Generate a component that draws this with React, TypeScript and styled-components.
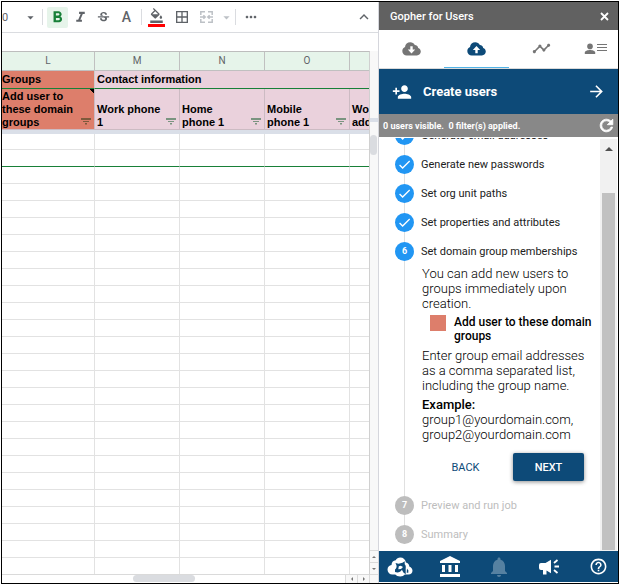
import React from "react";
import styled, { createGlobalStyle, css } from "styled-components";
import {
  MdAccountBalance,
  MdArrowDropDown,
  MdArrowForward,
  MdBorderAll,
  MdCheck,
  MdFormatBold,
  MdFormatColorFill,
  MdFormatItalic,
  MdHelpOutline,
  MdKeyboardArrowUp,
  MdMoreHoriz,
  MdNotifications,
  MdPersonAdd,
  MdRefresh,
  MdStrikethroughS,
  MdTimeline,
} from "react-icons/md";

const navy = "#0d4a78";
const green = "#188038";
const salmon = "#dd7e6b";
const pink = "#ead1dc";

const GlobalStyle = createGlobalStyle`
  * { box-sizing: border-box; }
  body { margin: 0; background: #fff; font-family: Roboto, "Liberation Sans", sans-serif; }
  button { font: inherit; color: inherit; background: none; border: 0; padding: 0; cursor: pointer; }
  svg { display: block; flex: none; }
`;

const Page = styled.div`
  height: 100vh;
  padding: 1px 0 0 1px;
`;

const Frame = styled.div`
  height: 100%;
  display: grid;
  grid-template-columns: minmax(0, 1fr) 239px;
  border: 1px solid #000;
  overflow: hidden;
`;

/* ---------- spreadsheet ---------- */

const Sheet = styled.main`
  display: flex;
  flex-direction: column;
  min-height: 0;
  border-right: 1px solid #d5d6dc;
`;

const Toolbar = styled.div`
  display: flex;
  align-items: center;
  height: 31px;
  flex: none;
  border-bottom: 1px solid #dadce0;
  color: #5f6368;
`;

const ToolGroup = styled.div<{ $gap: number }>`
  display: flex;
  align-items: center;
  gap: ${(p) => p.$gap}px;
`;

const ToolButton = styled.button<{ $active?: boolean; $narrow?: boolean; $muted?: boolean }>`
  display: flex;
  align-items: center;
  justify-content: center;
  width: ${(p) => (p.$narrow ? 10 : 21)}px;
  height: 21px;
  border-radius: 2px;
  ${(p) => p.$muted && css`color: #bdc1c6;`}
  ${(p) => p.$active && css`background: #e6f4ea; color: ${green};`}
`;

const LetterButton = styled(ToolButton)`
  font-size: 14px;
  font-weight: 500;
`;

const FillButton = styled(ToolButton)`
  height: 19px;
  align-items: flex-start;
  border-bottom: 3px solid #f00;
  border-radius: 0;
  width: 17px;
  margin: 0 2px;
`;

const SizeButton = styled.button`
  display: flex;
  align-items: center;
  justify-content: space-between;
  width: 36px;
  height: 21px;
  font-size: 11px;
`;

const ToolDivider = styled.span`
  width: 1px;
  height: 16px;
  margin: 0 4px;
  background: #dadce0;
`;

const Collapse = styled(ToolButton)`
  margin: 0 4px 0 auto;
`;

const FormulaSpace = styled.div`
  height: 18px;
  flex: none;
`;

const GridArea = styled.div`
  flex: 1;
  min-height: 0;
  display: grid;
  grid-template-columns: minmax(0, 1fr) 8px;
  grid-template-rows: minmax(0, 1fr) 8px;
`;

const Cells = styled.div`
  overflow: hidden;
  border-top: 1px solid #bdbdbd;
  border-right: 1px solid #d0d0d0;
  border-bottom: 1px solid #dadada;
`;

const Table = styled.table`
  table-layout: fixed;
  width: 433px;
  border-collapse: separate;
  border-spacing: 0;
  font: bold 11px/13px "Liberation Sans", Arial, sans-serif;
  color: #000;
`;

const ColumnLetter = styled.th`
  height: 19px;
  padding: 0;
  background: #e6f4ea;
  border-right: 1px solid #c0c0c0;
  border-bottom: 1px solid #c0c0c0;
  font: 10px/18px Roboto, sans-serif;
  color: #5f6368;
`;

const GroupCell = styled.th<{ $fill: string }>`
  height: 18px;
  padding: 0 0 0 2px;
  text-align: left;
  white-space: nowrap;
  background: ${(p) => p.$fill};
  border-right: 1px solid #ccc;
  border-bottom: 1px solid ${green};
  &:first-child { padding-left: 0; }
`;

const FieldCell = styled.th<{ $fill: string; $note?: boolean }>`
  height: 41px;
  padding: 0 3px 0 ${(p) => (p.$note ? 0 : 2)}px;
  vertical-align: bottom;
  text-align: left;
  background: ${(p) =>
    p.$note ? `linear-gradient(45deg, transparent 50%, #000 50%) top right / 4px 4px no-repeat, ${p.$fill}` : p.$fill};
  border-right: 1px solid #ccbbc3;
  border-bottom: 1px solid #ccbbc3;
`;

const Field = styled.div`
  display: flex;
  align-items: flex-end;
  justify-content: space-between;
  white-space: pre-line;
`;

const FilterButton = styled.button<{ $fill: string }>`
  padding-bottom: 4px;
  color: ${(p) => p.$fill};
`;

const FreezeCell = styled.td`
  height: 4px;
  padding: 0;
  background: #dadfe8;
`;

const Cell = styled.td<{ $first?: boolean; $marked?: boolean }>`
  height: ${(p) => (p.$first ? 16 : 17)}px;
  padding: 0;
  border-right: 1px solid #e2e2e2;
  border-bottom: 1px solid ${(p) => (p.$marked ? green : "#e2e2e2")};
`;

const VerticalScroll = styled.div`
  display: flex;
  flex-direction: column;
  background: #f8f8f8;
  border-bottom: 1px solid #dadada;
`;

const FreezeGrip = styled.div`
  height: 4px;
  margin-top: 67px;
  background: #dadfe8;
`;

const VerticalThumb = styled.div`
  width: 7px;
  height: 20px;
  margin-top: 13px;
  border-radius: 4px;
  background: #dadce0;
`;

const ArrowStack = styled.div`
  margin-top: auto;
  display: flex;
  flex-direction: column;
`;

const ScrollArrow = styled.button<{ $wide?: boolean }>`
  display: flex;
  align-items: center;
  justify-content: center;
  overflow: hidden;
  color: #777;
  background: #f8f8f8;
  ${(p) =>
    p.$wide
      ? css`width: 12px; height: 8px; border-left: 1px solid #dadada;`
      : css`width: 8px; height: 12px; border-top: 1px solid #dadada;`}
`;

const HorizontalScroll = styled.div`
  display: flex;
  padding-left: 131px;
  border-right: 1px solid #dadada;
`;

const HorizontalThumb = styled.div`
  width: 62px;
  height: 7px;
  border-radius: 4px;
  background: #dadce0;
`;

const ArrowPair = styled.div`
  display: flex;
  margin-left: auto;
`;

const Corner = styled.div`
  background: #f8f8f8;
`;

/* ---------- add-on sidebar ---------- */

const Sidebar = styled.aside`
  display: flex;
  flex-direction: column;
  min-height: 0;
  color: #212121;
`;

const TitleBar = styled.header`
  display: flex;
  align-items: center;
  justify-content: space-between;
  height: 28px;
  flex: none;
  padding: 0 9px 0 11px;
  background: #616161;
  color: #fff;
  font-size: 11px;
  font-weight: 500;
`;

const Tabs = styled.nav`
  display: flex;
  height: 39px;
  flex: none;
  overflow: hidden;
  border-bottom: 1px solid #dadada;
`;

const Tab = styled.button<{ $active?: boolean; $last?: boolean }>`
  flex: none;
  display: flex;
  align-items: center;
  justify-content: center;
  width: ${(p) => (p.$last ? 44 : 65)}px;
  color: ${(p) => (p.$active ? navy : "#757575")};
  border-bottom: 1px solid ${(p) => (p.$active ? "#4fb3e8" : "transparent")};
`;

const ActionBar = styled.button`
  && {
    display: flex;
    align-items: center;
    height: 45px;
    flex: none;
    padding: 0 12px 0 13px;
    background: ${navy};
    color: #fff;
    font-size: 13px;
    font-weight: 700;
  }
`;

const ActionLabel = styled.span`
  flex: 1;
  padding-left: 11px;
  text-align: left;
`;

const StatusBar = styled.div`
  display: flex;
  align-items: center;
  justify-content: space-between;
  height: 23px;
  flex: none;
  margin-bottom: 1px;
  padding: 0 2px 0 4px;
  background: #888;
  color: #fff;
  font-size: 9px;
  font-weight: 700;
  white-space: pre;
`;

const RefreshButton = styled.button`
  path:last-child { stroke: currentColor; stroke-width: 1; }
`;

const Viewport = styled.div`
  flex: 1;
  min-height: 0;
  display: grid;
  grid-template-columns: minmax(0, 1fr) 17px;
  grid-template-rows: minmax(0, 1fr);
  padding-right: 1px;
`;

const Steps = styled.ol`
  display: flex;
  flex-direction: column;
  justify-content: flex-end;
  margin: 0;
  padding: 0 2px 2px 16px;
  overflow: hidden;
  list-style: none;
`;

const Step = styled.li<{ $muted?: boolean }>`
  flex: none;
  display: grid;
  grid-template-columns: 19px minmax(0, 1fr);
  column-gap: 7px;
  font-size: 11px;
  line-height: 29px;
  color: ${(p) => (p.$muted ? "#bdbdbd" : "#212121")};
`;

const Rail = styled.span<{ $last?: boolean }>`
  display: flex;
  flex-direction: column;
  align-items: center;
  &::before, &::after { content: ""; width: 1px; background: #e0e0e0; height: 5px; }
  &::after { ${(p) => (p.$last ? css`height: 5px; background: none;` : css`height: auto; flex: 1;`)} }
`;

const Marker = styled.span<{ $muted?: boolean }>`
  display: flex;
  align-items: center;
  justify-content: center;
  width: 19px;
  height: 19px;
  border-radius: 50%;
  background: ${(p) => (p.$muted ? "#bdbdbd" : "#2196f3")};
  color: #fff;
  font-size: 9px;
  font-weight: 700;
  line-height: 19px;
`;

const StepBody = styled.div`
  padding: 0 0 10px 1px;
  color: #000;
  font-size: 13px;
  font-weight: 300;
  line-height: 15px;
`;

const Paragraph = styled.p`
  margin: 0 0 4px;
`;

const ColumnKey = styled.div`
  display: flex;
  gap: 8px;
  margin: 0 0 5px 8px;
  font-size: 12px;
  font-weight: 500;
  line-height: 14px;
`;

const Swatch = styled.span`
  flex: none;
  width: 16px;
  height: 16px;
  background: ${salmon};
`;

const Strong = styled.strong`
  font-weight: 500;
`;

const Actions = styled.div`
  display: flex;
  justify-content: flex-end;
  margin-top: 11px;
  padding-right: 14px;
  gap: 12px;
`;

const StepButton = styled.button<{ $primary?: boolean }>`
  && {
    width: 71px;
    height: 28px;
    border-radius: 2px;
    color: ${navy};
    font-size: 11px;
    font-weight: 400;
    ${(p) =>
      p.$primary &&
      css`
        background: ${navy};
        color: #fff;
        font-weight: 500;
        box-shadow: 0 1px 4px rgba(0, 0, 0, 0.45);
      `}
  }
`;

const ScrollTrack = styled.div`
  display: flex;
  flex-direction: column;
  align-items: center;
  margin-top: 1px;
  padding: 6px 2px 1px;
  background: #f1f1f1;
  color: #505050;
`;

const ScrollThumb = styled.div`
  flex: 1;
  align-self: stretch;
  margin-top: 40px;
  background: #c1c1c1;
`;

const Footer = styled.footer`
  display: flex;
  align-items: center;
  justify-content: space-between;
  height: 31px;
  flex: none;
  margin-bottom: 1px;
  padding: 0 7px 0 8px;
  background: ${navy};
  color: #fff;
`;

const FooterButton = styled.button<{ $dim?: boolean }>`
  display: flex;
  justify-content: center;
  width: 26px;
  opacity: ${(p) => (p.$dim ? 0.3 : 1)};
`;

/* ---------- icons ---------- */

const Cloud = ({ down }: { down?: boolean }) => (
  <svg width="19" height="14" viewBox="0 0 19 14" fill="currentColor">
    <path
      fillRule="evenodd"
      d={
        "M4.7 13.5A4.4 4.4 0 0 1 .3 9.1C.3 7.2 1.4 5.7 3 5 3.3 2.3 5.4.3 8.3.3c2 0 3.6 1 4.5 2.7 2 .1 3.2 1.3 3.4 3 1.5.5 2.6 1.9 2.6 3.6 0 2.2-1.7 3.9-3.9 3.9z " +
        (down ? "M8.3 4.2h2.4v3.3h2.5L9.5 11.4 5.8 7.5h2.5z" : "M8.3 11.2h2.4V7.9h2.5L9.5 4 5.8 7.9h2.5z")
      }
    />
  </svg>
);

const PersonLines = () => (
  <svg width="24" height="12" viewBox="0 0 24 12" fill="currentColor">
    <circle cx="6" cy="3.4" r="2.8" />
    <path d="M.8 11V9.6C.8 7.9 3.6 7 6 7s5.2.9 5.2 2.6V11z" />
    <path d="M13 1h10v1H13zM13 4h10v1H13zM13 7h10v1H13z" />
  </svg>
);

const Close = () => (
  <svg width="9" height="9" viewBox="0 0 9 9" stroke="currentColor" strokeWidth="1.8">
    <path d="M1 1l7 7M8 1L1 8" />
  </svg>
);

const FilterLines = () => (
  <svg width="10" height="7" viewBox="0 0 10 7" fill="currentColor">
    <path d="M0 0h10v2H0zM2 3h6v1H2zM4 5h2v1.500H4z" />
  </svg>
);

const MergeCells = () => (
  <svg width="13" height="12" viewBox="0 0 13 12" fill="none" stroke="currentColor" strokeWidth="1.5">
    <path d="M5 .8H.8V4M8 .8h4.2V4M5 11.2H.8V8M8 11.2h4.2V8M0 6h5M13 6H8M3.4 4.2L5.2 6 3.4 7.8M9.6 4.2L7.8 6l1.8 1.8" />
  </svg>
);

const GopherCloud = () => (
  <svg width="26" height="20" viewBox="0 0 26 20" fill="currentColor">
    <path d="M5.500 17.500A4.900 4.900 0 0 1 .5 12.700C.5 10 2.300 8.300 4.500 8 4.700 5 6.300 3.500 8.700 3.300 9.700 1.500 11.200.5 13.200.5c3.200 0 5.300 2 5.700 5 2.200.5 3.300 2 3.400 4 2 .8 3.200 2.300 3.200 4.300 0 2.300-1.700 3.700-4 3.700h-3.700c-1 1.300-2.500 2-4.600 2-2.200 0-3.900-.7-4.900-2z" />
    <path
      fill={navy}
      d="M8 12.500c1.300-.8 1.800-2.200 1.500-4L8.500 6l3 .8c1.500-.3 2.700-.5 4-1l2.200-1.600v3c1 1 1.300 2.300 1 4v6l-2.300-1.700-1.500-2.700c-1.500 2.400-4 3.200-6.900 2.200z"
    />
    <path d="M11.800 9.200l2-.4 2.200 1.200-2 2-2.700.3z" />
    <path fill={navy} d="M20 11.500l1.300 2v2.300h-1.600z" />
  </svg>
);

const Megaphone = () => (
  <svg width="22" height="18" viewBox="0 0 22 18" fill="currentColor">
    <path d="M3 5h4.500L13 1.800v13.400L8.500 12.500v4H5V12H3a2 2 0 0 1-2-2V7a2 2 0 0 1 2-2z" />
    <path fill="none" stroke="currentColor" strokeWidth="1.8" d="M16 5l3.500-3M16.500 8.500H21M16 12l3.500 3" />
  </svg>
);

const Triangle = ({ size, turn }: { size: number; turn: number }) => (
  <svg width={size} height={size} viewBox="0 0 8 8" fill="currentColor">
    <path transform={`rotate(${turn} 4 4)`} d="M0 6l4-4 4 4z" />
  </svg>
);

/* ---------- data ---------- */

const columns = ["L", "M", "N", "O", ""];

const fields = [
  { label: "Add user to\nthese domain\ngroups", fill: salmon, note: true },
  { label: "Work phone\n1", fill: pink },
  { label: "Home\nphone 1", fill: pink },
  { label: "Mobile\nphone 1", fill: pink },
  { label: "Work\naddress", fill: pink },
];

const doneSteps = [
  "Generate email addresses",
  "Generate new passwords",
  "Set org unit paths",
  "Set properties and attributes",
];

const pendingSteps = [
  { number: 7, label: "Preview and run job" },
  { number: 8, label: "Summary" },
];

const rowNumbers = Array.from({ length: 26 }, (_, i) => i);

function Spreadsheet() {
  return (
    <Sheet>
      <Toolbar>
        <SizeButton aria-label="Font size">
          <span>0</span>
          <MdArrowDropDown size={15} />
        </SizeButton>
        <ToolDivider />
        <ToolGroup $gap={2}>
          <ToolButton $active aria-label="Bold"><MdFormatBold size={19} /></ToolButton>
          <ToolButton aria-label="Italic"><MdFormatItalic size={17} /></ToolButton>
          <ToolButton aria-label="Strikethrough"><MdStrikethroughS size={15} /></ToolButton>
          <LetterButton aria-label="Text color">A</LetterButton>
        </ToolGroup>
        <ToolDivider />
        <ToolGroup $gap={4}>
          <FillButton aria-label="Fill color"><MdFormatColorFill size={15} /></FillButton>
          <ToolButton aria-label="Borders"><MdBorderAll size={16} /></ToolButton>
          <ToolButton $muted aria-label="Merge cells"><MergeCells /></ToolButton>
          <ToolButton $muted $narrow aria-label="Merge options"><MdArrowDropDown size={15} /></ToolButton>
        </ToolGroup>
        <ToolDivider />
        <ToolButton aria-label="More"><MdMoreHoriz size={16} /></ToolButton>
        <Collapse aria-label="Hide menus"><MdKeyboardArrowUp size={18} /></Collapse>
      </Toolbar>
      <FormulaSpace />
      <GridArea>
        <Cells>
          <Table>
            <colgroup>
              <col style={{ width: 93 }} />
              <col /><col /><col /><col />
            </colgroup>
            <thead>
              <tr>{columns.map((c) => <ColumnLetter key={c}>{c}</ColumnLetter>)}</tr>
              <tr>
                <GroupCell $fill={salmon}>Groups</GroupCell>
                <GroupCell $fill={pink} colSpan={4}>Contact information</GroupCell>
              </tr>
              <tr>
                {fields.map((f) => (
                  <FieldCell key={f.label} $fill={f.fill} $note={f.note}>
                    <Field>
                      {f.label}
                      <FilterButton $fill={f.note ? "#7d5a3c" : "#7a9480"} aria-label="Filter">
                        <FilterLines />
                      </FilterButton>
                    </Field>
                  </FieldCell>
                ))}
              </tr>
            </thead>
            <tbody>
              <tr><FreezeCell colSpan={5} /></tr>
              {rowNumbers.map((n) => (
                <tr key={n}>
                  {columns.map((c) => <Cell key={c} $first={n === 0} $marked={n === 1} />)}
                </tr>
              ))}
            </tbody>
          </Table>
        </Cells>
        <VerticalScroll>
          <FreezeGrip />
          <VerticalThumb />
          <ArrowStack>
            <ScrollArrow aria-label="Scroll up"><Triangle size={4} turn={0} /></ScrollArrow>
            <ScrollArrow aria-label="Scroll down"><Triangle size={4} turn={180} /></ScrollArrow>
          </ArrowStack>
        </VerticalScroll>
        <HorizontalScroll>
          <HorizontalThumb />
          <ArrowPair>
            <ScrollArrow $wide aria-label="Scroll left"><Triangle size={4} turn={270} /></ScrollArrow>
            <ScrollArrow $wide aria-label="Scroll right"><Triangle size={4} turn={90} /></ScrollArrow>
          </ArrowPair>
        </HorizontalScroll>
        <Corner />
      </GridArea>
    </Sheet>
  );
}

function GopherSidebar() {
  return (
    <Sidebar>
      <TitleBar>
        Gopher for Users
        <button aria-label="Close"><Close /></button>
      </TitleBar>
      <Tabs>
        <Tab aria-label="Import"><Cloud down /></Tab>
        <Tab $active aria-label="Export"><Cloud /></Tab>
        <Tab aria-label="Activity"><MdTimeline size={19} /></Tab>
        <Tab $last aria-label="Account"><PersonLines /></Tab>
      </Tabs>
      <ActionBar>
        <MdPersonAdd size={20} />
        <ActionLabel>Create users</ActionLabel>
        <MdArrowForward size={19} />
      </ActionBar>
      <StatusBar>
        {"0 users visible.  0 filter(s) applied."}
        <RefreshButton aria-label="Refresh"><MdRefresh size={19} /></RefreshButton>
      </StatusBar>
      <Viewport>
        <Steps>
          {doneSteps.map((label) => (
            <Step key={label}>
              <Rail><Marker><MdCheck size={15} /></Marker></Rail>
              {label}
            </Step>
          ))}
          <Step>
            <Rail><Marker>6</Marker></Rail>
            <div>
              Set domain group memberships
              <StepBody>
                <Paragraph>You can add new users to groups immediately upon creation.</Paragraph>
                <ColumnKey>
                  <Swatch />
                  <span>Add user to these domain groups</span>
                </ColumnKey>
                <Paragraph>Enter group email addresses as a comma separated list, including the group name.</Paragraph>
                <div>
                  <Strong>Example:</Strong><br />
                  group1@yourdomain.com,<br />
                  group2@yourdomain.com
                </div>
                <Actions>
                  <StepButton>BACK</StepButton>
                  <StepButton $primary>NEXT</StepButton>
                </Actions>
              </StepBody>
            </div>
          </Step>
          {pendingSteps.map((s) => (
            <Step key={s.number} $muted>
              <Rail $last={s.number === 8}><Marker $muted>{s.number}</Marker></Rail>
              {s.label}
            </Step>
          ))}
        </Steps>
        <ScrollTrack>
          <Triangle size={8} turn={0} />
          <ScrollThumb />
        </ScrollTrack>
      </Viewport>
      <Footer>
        <FooterButton aria-label="Gopher home"><GopherCloud /></FooterButton>
        <FooterButton aria-label="Organization"><MdAccountBalance size={24} /></FooterButton>
        <FooterButton $dim aria-label="Notifications"><MdNotifications size={24} /></FooterButton>
        <FooterButton aria-label="Announcements"><Megaphone /></FooterButton>
        <FooterButton aria-label="Help"><MdHelpOutline size={19} /></FooterButton>
      </Footer>
    </Sidebar>
  );
}

export default function App() {
  return (
    <>
      <GlobalStyle />
      <Page>
        <Frame>
          <Spreadsheet />
          <GopherSidebar />
        </Frame>
      </Page>
    </>
  );
}
